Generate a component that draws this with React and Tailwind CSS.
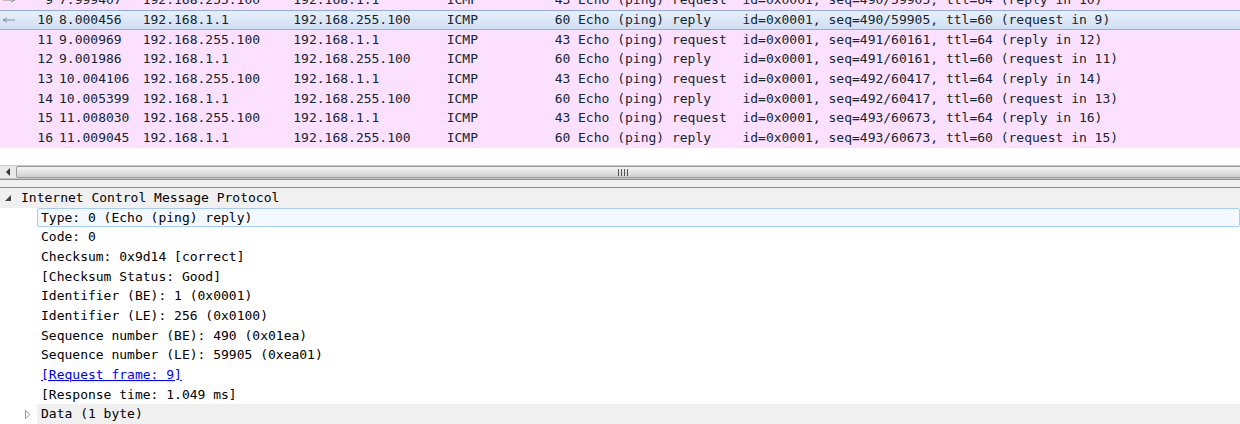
import React from "react";

const packets = [
  { no: 9, time: "7.999407", src: "192.168.255.100", dst: "192.168.1.1", len: 43, info: "Echo (ping) request  id=0x0001, seq=490/59905, ttl=64 (reply in 10)", arrow: "right" },
  { no: 10, time: "8.000456", src: "192.168.1.1", dst: "192.168.255.100", len: 60, info: "Echo (ping) reply    id=0x0001, seq=490/59905, ttl=60 (request in 9)", arrow: "left", selected: true },
  { no: 11, time: "9.000969", src: "192.168.255.100", dst: "192.168.1.1", len: 43, info: "Echo (ping) request  id=0x0001, seq=491/60161, ttl=64 (reply in 12)" },
  { no: 12, time: "9.001986", src: "192.168.1.1", dst: "192.168.255.100", len: 60, info: "Echo (ping) reply    id=0x0001, seq=491/60161, ttl=60 (request in 11)" },
  { no: 13, time: "10.004106", src: "192.168.255.100", dst: "192.168.1.1", len: 43, info: "Echo (ping) request  id=0x0001, seq=492/60417, ttl=64 (reply in 14)" },
  { no: 14, time: "10.005399", src: "192.168.1.1", dst: "192.168.255.100", len: 60, info: "Echo (ping) reply    id=0x0001, seq=492/60417, ttl=60 (request in 13)" },
  { no: 15, time: "11.008030", src: "192.168.255.100", dst: "192.168.1.1", len: 43, info: "Echo (ping) request  id=0x0001, seq=493/60673, ttl=64 (reply in 16)" },
  { no: 16, time: "11.009045", src: "192.168.1.1", dst: "192.168.255.100", len: 60, info: "Echo (ping) reply    id=0x0001, seq=493/60673, ttl=60 (request in 15)" },
];

const details = [
  "Code: 0",
  "Checksum: 0x9d14 [correct]",
  "[Checksum Status: Good]",
  "Identifier (BE): 1 (0x0001)",
  "Identifier (LE): 256 (0x0100)",
  "Sequence number (BE): 490 (0x01ea)",
  "Sequence number (LE): 59905 (0xea01)",
];

function Arrow({ dir }) {
  // related-packet arrow in the first column
  return (
    <svg width="18" height="20" viewBox="0 0 18 20" className="shrink-0">
      <line x1="3" y1="10" x2="15" y2="10" stroke="#8a8f96" strokeWidth="1" />
      {dir === "left" ? (
        <path d="M3 10 L7 8 M3 10 L7 12" stroke="#8a8f96" strokeWidth="1" fill="none" />
      ) : (
        <path d="M15 10 L11 8 M15 10 L11 12" stroke="#8a8f96" strokeWidth="1" fill="none" />
      )}
    </svg>
  );
}

function PacketRow({ p }) {
  const rowBg = p.selected
    ? "bg-linear-to-b from-[#e8f0fb] to-[#cfdef2] border-y border-[#8fb0d8]"
    : "bg-[#fce0ff]";
  return (
    <div className={`flex items-center h-[19.67px] whitespace-pre text-[#12272e] ${rowBg}`}>
      <div className="w-[18px] flex items-center">{p.arrow && <Arrow dir={p.arrow} />}</div>
      <div className="w-[35px] text-right">{p.no}</div>
      <div className="w-[6px]" />
      <div className="w-[83.7px]">{p.time}</div>
      <div className="w-[150.6px]">{p.src}</div>
      <div className="w-[153.4px]">{p.dst}</div>
      <div className="w-[96px]">ICMP</div>
      <div className="w-[27.7px] text-right">{p.len}</div>
      <div className="w-[7.7px]" />
      <div>{p.info}</div>
    </div>
  );
}

function HScrollbar() {
  return (
    <div className="flex h-[14px] bg-[#e9e9e9] border-y border-[#c9c9c9]">
      <div className="w-[16px] flex items-center justify-center">
        <svg width="6" height="8" viewBox="0 0 6 8">
          <path d="M5 0 L1 4 L5 8 Z" fill="#333" />
        </svg>
      </div>
      <div className="flex-1 flex items-center justify-center rounded-[2px] border border-[#9c9c9c] bg-linear-to-b from-[#f4f4f4] via-[#e3e3e3] to-[#cfcfcf] -mr-[4px]">
        <div className="flex gap-[2px] h-[7px] -ml-[14px]">
          <div className="w-[1px] bg-[#555]" />
          <div className="w-[1px] bg-[#555]" />
          <div className="w-[1px] bg-[#555]" />
          <div className="w-[1px] bg-[#555]" />
        </div>
      </div>
    </div>
  );
}

export default function App() {
  return (
    <div className="w-[1240px] h-[424px] overflow-hidden bg-white font-['DejaVu_Sans_Mono',monospace] text-[13px]">
      {/* packet list */}
      <div className="h-[165px] overflow-hidden">
        <div className="-mt-[9.67px]">
          {packets.map((p) => (
            <PacketRow key={p.no} p={p} />
          ))}
        </div>
      </div>

      <HScrollbar />

      {/* splitter */}
      <div className="h-[9px] bg-[#f0f0f0] border-y border-[#8c8c8c]" />

      {/* packet details */}
      <div className="bg-white text-black">
        <div className="flex items-center h-[19.67px] bg-[#f0f0f0] whitespace-pre">
          <div className="w-[21px] flex justify-center">
            <svg width="6" height="6" viewBox="0 0 6 6" className="-ml-[6px]">
              <path d="M6 0 L6 6 L0 6 Z" fill="#444" />
            </svg>
          </div>
          <span>Internet Control Message Protocol</span>
        </div>
        <div className="flex h-[19.67px]">
          <div className="w-[37px]" />
          <div className="flex-1 flex items-center pl-[3px] border border-[#a7cdf0] bg-[#f4f9ff] rounded-[2px]">
            Type: 0 (Echo (ping) reply)
          </div>
        </div>
        {details.map((d) => (
          <div key={d} className="flex items-center h-[19.67px] pl-[41px] whitespace-pre">
            {d}
          </div>
        ))}
        <div className="flex items-center h-[19.67px] pl-[41px]">
          <span className="text-[#0000ff] underline">[Request frame: 9]</span>
        </div>
        <div className="flex items-center h-[19.67px] pl-[41px]">[Response time: 1.049 ms]</div>
        <div className="flex h-[19.67px]">
          <div className="w-[37px] flex items-center justify-end pr-[6px]">
            <svg width="6" height="9" viewBox="0 0 6 9">
              <path d="M0.5 0.5 L5 4.5 L0.5 8.5 Z" fill="none" stroke="#9a9a9a" strokeWidth="1" />
            </svg>
          </div>
          <div className="flex-1 flex items-center pl-[4px] bg-[#f0f0f0]">Data (1 byte)</div>
        </div>
      </div>
    </div>
  );
}
